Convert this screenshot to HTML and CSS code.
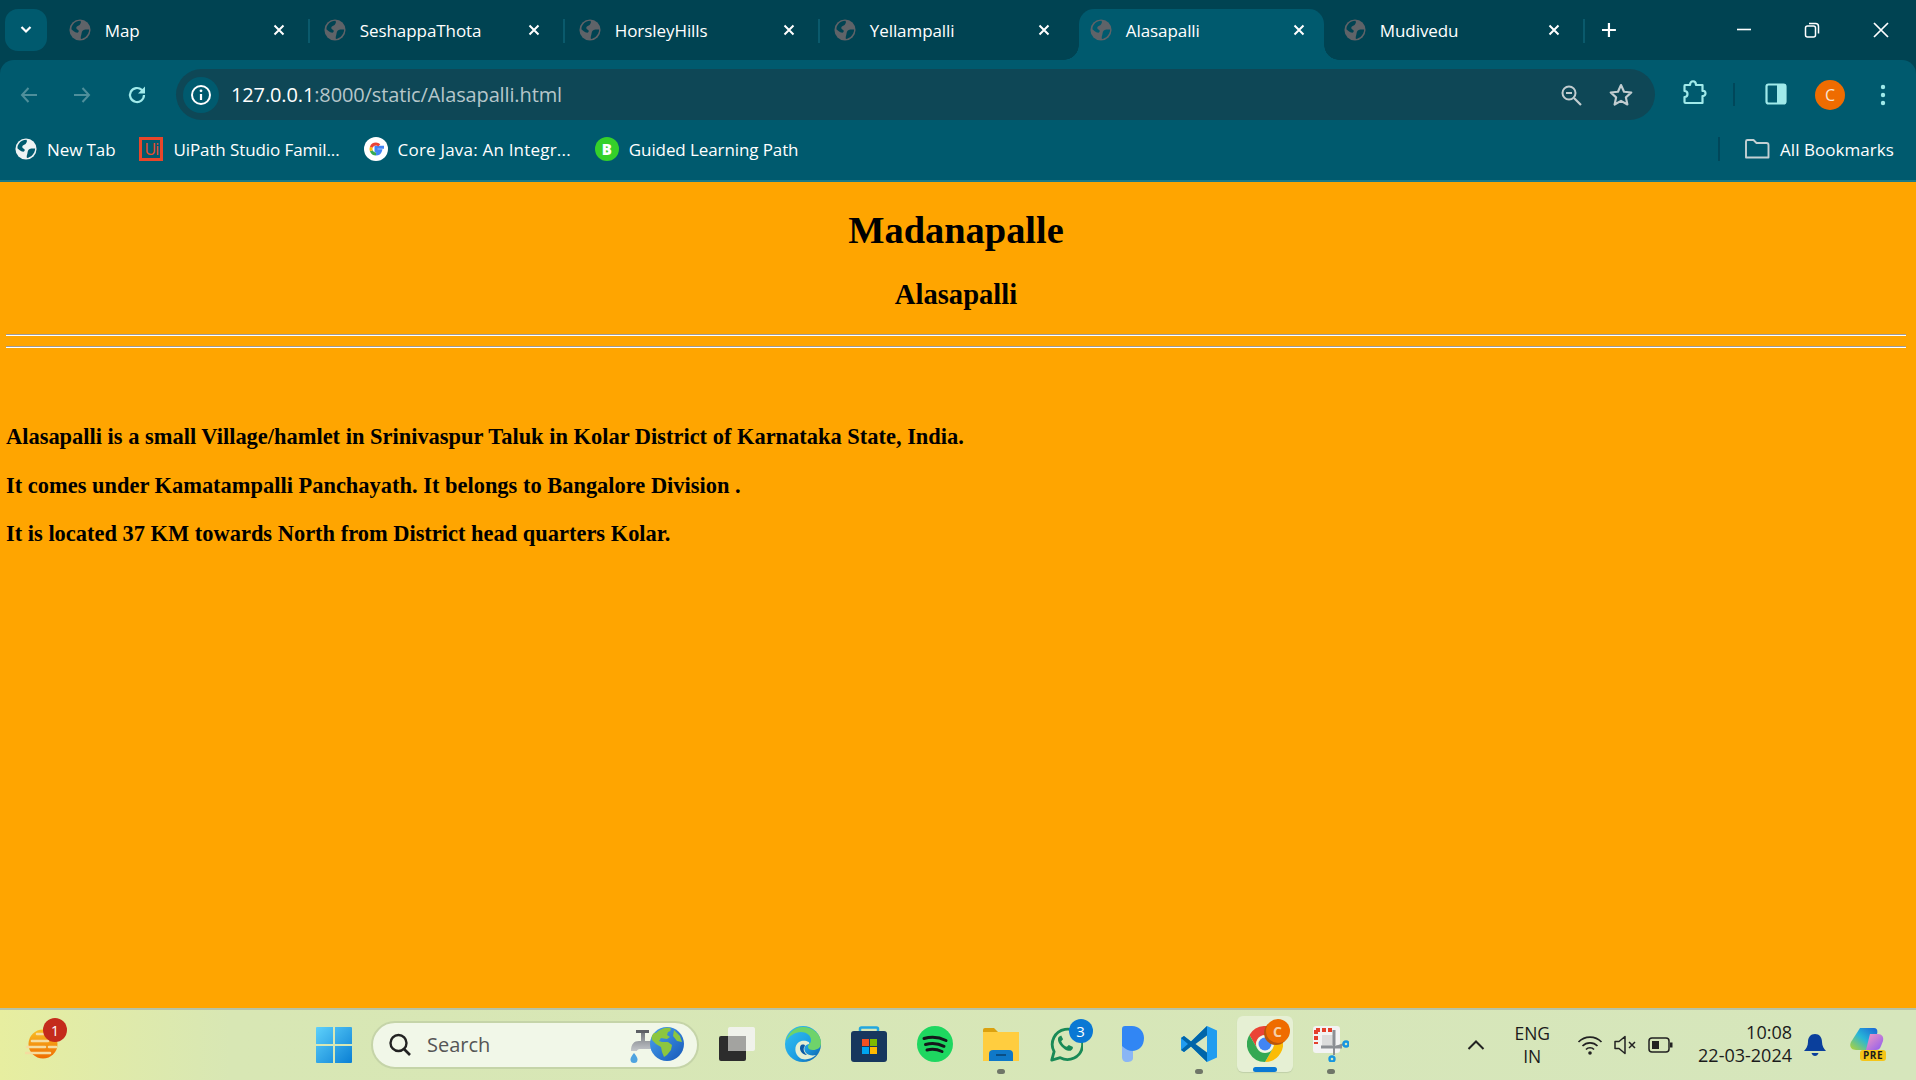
FILE: index.html
```html
<!DOCTYPE html>
<html lang="en">
<head>
<meta charset="utf-8">
<title>Alasapalli</title>
<link rel="stylesheet" href="styles.css">
</head>
<body>
<svg class="defs" width="0" height="0" aria-hidden="true">
  <symbol id="globe" viewBox="0 0 24 24">
    <circle cx="12" cy="12" r="11.5" fill="currentColor"/>
    <path d="M4 6.500C6 3.500 9 2 12.500 2c1 1.500 .5 3-1 4.500-1 1-3 1-3.500 2.500-.5 2 1.500 2.500 2.500 3.500.5 1-.5 2.500-1.500 2.500C6 15 4 12 2.800 11.500 2.500 9.500 3 8 4 6.500zM16 12c2.500-1 4.500-.5 6-.5 0 3-1.500 6-4 8-1 .5-3 2-5 2.300-.5-1.800 0-3 .5-4.800.5-2.500.5-4 2.500-5z" class="globe-land"/>
  </symbol>
  <symbol id="x" viewBox="0 0 14 14"><path d="M2.500 2.500l9 9m0-9l-9 9" fill="none" stroke="currentColor" stroke-width="2"/></symbol>
</svg>

<div class="browser">
  <div class="tabstrip">
    <button class="tab-search"><svg width="14" height="10" viewBox="0 0 14 10"><path d="M2.500 2l4.500 4.500L11.500 2" fill="none" stroke="#fff" stroke-width="2.200"/></svg></button>
    <div class="tabs">
      <div class="tab sep"><svg class="fav"><use href="#globe"/></svg><span class="tab-title">Map</span><svg class="close"><use href="#x"/></svg></div>
      <div class="tab sep"><svg class="fav"><use href="#globe"/></svg><span class="tab-title">SeshappaThota</span><svg class="close"><use href="#x"/></svg></div>
      <div class="tab sep"><svg class="fav"><use href="#globe"/></svg><span class="tab-title">HorsleyHills</span><svg class="close"><use href="#x"/></svg></div>
      <div class="tab"><svg class="fav"><use href="#globe"/></svg><span class="tab-title">Yellampalli</span><svg class="close"><use href="#x"/></svg></div>
      <div class="tab active"><svg class="fav"><use href="#globe"/></svg><span class="tab-title">Alasapalli</span><svg class="close"><use href="#x"/></svg></div>
      <div class="tab sep"><svg class="fav"><use href="#globe"/></svg><span class="tab-title">Mudivedu</span><svg class="close"><use href="#x"/></svg></div>
    </div>
    <svg class="newtab" width="18" height="18" viewBox="0 0 18 18"><path d="M9 2v14M2 9h14" stroke="#fff" stroke-width="2.200"/></svg>
    <div class="win">
      <svg width="16" height="16" viewBox="0 0 16 16"><path d="M1 7.500h14" stroke="#fff" stroke-width="1.600"/></svg>
      <svg width="16" height="18" viewBox="0 0 16 18"><rect x="1.500" y="5" width="10" height="11" rx="2" fill="none" stroke="#fff" stroke-width="1.500"/><path d="M5 2.500h6.500a3 3 0 0 1 3 3v7" fill="none" stroke="#fff" stroke-width="1.500"/></svg>
      <svg width="18" height="18" viewBox="0 0 18 18"><path d="M2 2l14 14M16 2L2 16" stroke="#fff" stroke-width="1.700"/></svg>
    </div>
  </div>

  <div class="toolbar">
    <svg class="nav back" width="22" height="22" viewBox="0 0 22 22"><path d="M19 11H4m6.500-7L4 11l6.500 7" fill="none" stroke="#4f8f9b" stroke-width="2"/></svg>
    <svg class="nav fwd" width="22" height="22" viewBox="0 0 22 22"><path d="M3 11h15m-6.500-7l6.500 7-6.500 7" fill="none" stroke="#4f8f9b" stroke-width="2"/></svg>
    <svg class="nav reload" width="22" height="22" viewBox="0 0 22 22"><path d="M18 11a7 7 0 1 1-2.200-5.100L18 8" fill="none" stroke="#a0eaea" stroke-width="2.200"/><path d="M19 2.500v7h-7z" fill="#a0eaea"/></svg>
    <div class="omnibox">
      <span class="info"><svg width="22" height="22" viewBox="0 0 22 22"><circle cx="11" cy="11" r="9" fill="none" stroke="#fff" stroke-width="2"/><path d="M11 10v6" stroke="#fff" stroke-width="2.200"/><circle cx="11" cy="6.800" r="1.400" fill="#fff"/></svg></span>
      <span class="url"><span class="url-host">127.0.0.1</span>:8000/static/Alasapalli.html</span>
      <svg class="zoom-ic" width="24" height="24" viewBox="0 0 24 24"><circle cx="10" cy="10" r="6.500" fill="none" stroke="#c2cdd0" stroke-width="2"/><path d="M7 10h6" stroke="#c2cdd0" stroke-width="2"/><path d="M15 15l7 7" stroke="#c2cdd0" stroke-width="2.200"/></svg>
      <svg class="star-ic" width="26" height="26" viewBox="0 0 24 24"><path d="M12 2.800l2.800 6.200 6.700.7-5 4.500 1.400 6.600-5.900-3.400-5.900 3.400 1.400-6.600-5-4.500 6.700-.7z" fill="none" stroke="#c2cdd0" stroke-width="2" stroke-linejoin="round"/></svg>
    </div>
    <svg class="ext" width="26" height="28" viewBox="0 0 26 28"><path d="M3 6h5c0-5 6-5 6 0h6.500v6c4-1 4 5.500 0 5v7H3.500c-1 0-1-1-1-1v-5c4 0 4-6 0-6V7c0-1 .5-1 .5-1z" fill="none" stroke="#a0eaea" stroke-width="2.200" stroke-linejoin="round"/></svg>
    <span class="tool-sep"></span>
    <svg class="panel" width="22" height="22" viewBox="0 0 22 22"><rect x="1.500" y="1.500" width="19" height="19" rx="2" fill="none" stroke="#a0eaea" stroke-width="2.200"/><rect x="12" y="1.500" width="8.500" height="19" fill="#a0eaea"/></svg>
    <span class="avatar">C</span>
    <svg class="dots" width="6" height="24" viewBox="0 0 6 24"><circle cx="3" cy="4" r="2.200" fill="#a0eaea"/><circle cx="3" cy="12" r="2.200" fill="#a0eaea"/><circle cx="3" cy="20" r="2.200" fill="#a0eaea"/></svg>
  </div>

  <div class="bookmarks">
    <span class="bm"><svg class="bm-globe"><use href="#globe"/></svg>New Tab</span>
    <span class="bm"><span class="ui-logo">Ui</span>UiPath Studio Famil...</span>
    <span class="bm bm-wide"><span class="g-logo"><svg width="20" height="20" viewBox="0 0 20 20"><path d="M18 8.200h-8v3.500h4.500c-.6 2-2.300 3.200-4.500 3.200" fill="none" stroke="#4285f4" stroke-width="3"/><path d="M10 14.900c-2.200 0-4-1.300-4.700-3.200" fill="none" stroke="#34a853" stroke-width="3"/><path d="M5.300 11.700a5 5 0 0 1 0-3.500" fill="none" stroke="#fbbc05" stroke-width="3"/><path d="M5.300 8.200C6 6.300 7.800 5 10 5c1.300 0 2.400.5 3.300 1.300" fill="none" stroke="#ea4335" stroke-width="3"/></svg></span>Core Java: An Integr...</span>
    <span class="bm"><span class="b-logo">B</span>Guided Learning Path</span>
    <span class="bm-sep"></span>
    <span class="bm all"><svg width="26" height="22" viewBox="0 0 26 22"><path d="M2 19.500V3.500c0-1 .5-1.500 1.500-1.500h6l3 3h10c1 0 2 .5 2 2v12.500z" fill="none" stroke="#c4d0d3" stroke-width="1.900" stroke-linejoin="round"/></svg>All Bookmarks</span>
  </div>
</div>

<main class="page">
  <h1>Madanapalle</h1>
  <h2>Alasapalli</h2>
  <hr>
  <hr>
  <p class="first">Alasapalli is a small Village/hamlet in Srinivaspur Taluk in Kolar District of Karnataka State, India.</p>
  <p>It comes under Kamatampalli Panchayath. It belongs to Bangalore Division .</p>
  <p>It is located 37 KM towards North from District head quarters Kolar.</p>
</main>

<footer class="taskbar">
  <div class="weather">
    <svg width="36" height="32" viewBox="0 0 36 32"><defs><linearGradient id="sun" x1="0" y1="0" x2="0" y2="1"><stop offset="0" stop-color="#f9c025"/><stop offset="1" stop-color="#ef6c00"/></linearGradient></defs><circle cx="18" cy="15" r="14.500" fill="url(#sun)"/><path d="M12 5h13M7 12h16M2 18h18M24 18h7M1 24h24" stroke="#f5dca0" stroke-width="2.600" stroke-linecap="round"/></svg>
    <span class="weather-badge">1</span>
  </div>
  <div class="center">
    <svg class="start" width="36" height="36" viewBox="0 0 36 36"><defs><linearGradient id="w1" x1="0" y1="0" x2="1" y2="1"><stop offset="0" stop-color="#5ed1fb"/><stop offset="1" stop-color="#0a7fd4"/></linearGradient></defs><path d="M1 0h16v17H0V1a1 1 0 0 1 1-1zM19 0h16a1 1 0 0 1 1 1v16H19zM0 19h17v17H1a1 1 0 0 1-1-1zM19 19h17v16a1 1 0 0 1-1 1H19z" fill="url(#w1)"/></svg>
    <div class="search">
      <svg width="26" height="26" viewBox="0 0 26 26"><circle cx="11.500" cy="11" r="8" fill="none" stroke="#222" stroke-width="2.400"/><path d="M17 17l6 6" stroke="#222" stroke-width="2.600"/></svg>
      <span class="search-text">Search</span>
      <svg class="search-art" width="56" height="42" viewBox="0 0 56 42"><defs><linearGradient id="tap" x1="0" y1="0" x2="0" y2="1"><stop offset="0" stop-color="#777b80"/><stop offset="1" stop-color="#c3c6ca"/></linearGradient><linearGradient id="sea" x1="0" y1="0" x2="1" y2="1"><stop offset="0" stop-color="#4aa3f0"/><stop offset="1" stop-color="#1557b8"/></linearGradient></defs><path d="M3 28c0-7 3-10 8-10h2v-8h4v8h6v8H12c-2 0-3 1-3 2z" fill="url(#tap)"/><path d="M8 7h13v3H8z" fill="#5d6065"/><path d="M6 30c2 2.500 3.500 4.500 3.500 6.500a3.500 3.500 0 0 1-7 0c0-2 1.500-4 3.500-6.500z" fill="#4ea3e0"/><circle cx="39" cy="21" r="17" fill="url(#sea)"/><path d="M28 10c4-4 10-6 14-5 2 1 0 4-2 4l-1 3 3 2-3 2-6-1-2 3 3 1 6 0 4 3-1 5-4 5-3 2-2-5-1-5-5-3-4-4c-1-3 0-5 2-7z" fill="#8cc63f"/><path d="M46 7l6 6 2 6-5-1-4-5z" fill="#8cc63f"/></svg>
    </div>
    <span class="tb"><svg width="36" height="34" viewBox="0 0 36 34"><rect y="9" width="27" height="25" rx="2" fill="#2c2c2c"/><rect x="9" width="27" height="24" rx="2" fill="#f4f4f2" fill-opacity=".88"/><rect x="9" y="9" width="18" height="15" fill="#a3a3a0"/></svg></span>
    <span class="tb"><svg width="36" height="36" viewBox="0 0 36 36"><defs><linearGradient id="e1" x1="0" y1="0" x2="1" y2="1"><stop offset="0" stop-color="#35c1f1"/><stop offset=".6" stop-color="#1b9de2"/><stop offset="1" stop-color="#0c59a4"/></linearGradient></defs><circle cx="18" cy="18" r="18" fill="url(#e1)"/><path d="M18 1c10 0 18 7 18 16 0 5-4 7-8 7-3 0-5-1-5-3 0-3 3-3 3-7 0-5-5-8-10-8-6 0-12 4-15 9C3 7 10 1 18 1z" fill="#6fd36a"/><path d="M14 16c5-3 12 0 10 2-5 1-6 5-3 9 2 2 6 3 10 2-4 4-12 6-16 3-6-4-6-13-1-16z" fill="#e4efd3"/><path d="M16 19c3-1 4 0 4 1-2 2-2 6 2 9-5 0-9-6-6-10z" fill="#0c59a4"/></svg></span>
    <span class="tb"><svg width="36" height="36" viewBox="0 0 36 36"><path d="M9 7V3c0-1 .5-1.500 1.500-1.500h15c1 0 1.500 .5 1.500 1.500v4" fill="none" stroke="#22a7e0" stroke-width="2.500"/><rect y="5" width="36" height="31" rx="3" fill="#17375e"/><rect x="11" y="13" width="7" height="7" fill="#f25022"/><rect x="19" y="13" width="7" height="7" fill="#7fba00"/><rect x="11" y="21" width="7" height="7" fill="#00a4ef"/><rect x="19" y="21" width="7" height="7" fill="#ffb900"/></svg></span>
    <span class="tb"><svg width="36" height="36" viewBox="0 0 36 36"><circle cx="18" cy="18" r="18" fill="#1ed760"/><path d="M7 12.500c7-2 15-1.500 22 2M8.500 18.500c6-1.600 13-1 18.500 1.800M10 24c5-1.300 10-.8 15 1.500" fill="none" stroke="#14171a" stroke-width="3" stroke-linecap="round"/></svg></span>
    <span class="tb running"><svg width="36" height="33" viewBox="0 0 36 33"><path d="M0 2a2 2 0 0 1 2-2h9l4 4H0z" fill="#dba10f"/><path d="M0 4h36v29H0z" fill="#ffcd3f"/><path d="M6 33v-7a4 4 0 0 1 4-4h16a4 4 0 0 1 4 4v7z" fill="#0f78c8"/><path d="M13 27h10" stroke="#0a4e85" stroke-width="2"/></svg></span>
    <span class="tb wa"><svg class="wa-icon" width="36" height="36" viewBox="0 0 38 38"><path d="M5 36l2.500-9A16 16 0 1 1 14 33.500z" fill="none" stroke="#198a57" stroke-width="3" stroke-linejoin="round"/><path d="M13 11c-2 1-2 5 1 9s8 7 11 6c2-1 3-3 2-4l-4-2-2 2c-2-.5-5-3-6-6l2-2-2-4z" fill="#198a57"/></svg><span class="wa-badge">3</span></span>
    <span class="tb"><svg width="22" height="36" viewBox="0 0 22 36"><path d="M0 3a3 3 0 0 1 3-3h7c7 0 12 5 12 12 0 8-5 13-12 13v1H0z" fill="#3186f4"/><path d="M0 20c3 3 7 5 11 5v7c0 3-3 4-6 4-3 0-5-2-5-5z" fill="#8ab6f4"/></svg></span>
    <span class="tb running"><svg width="36" height="36" viewBox="0 0 36 36"><path d="M26 0l10 4.500v27L26 36 10 20.500 3 26 0 24V12l3-2 7 5.500z" fill="#1f9cf0"/><path d="M26 0v36l-16-15.500L3 26 0 24l7-6-7-6 3-2 7 5.500z" fill="#0065a9"/><path d="M26 9.500L14.500 18 26 26.500z" fill="#d8e7c0"/></svg></span>
    <span class="tb chrome">
      <svg width="36" height="36" viewBox="0 0 36 36"><path d="M2.400 9A18 18 0 0 1 33.600 9H18a9 9 0 0 0-7.800 13.500z" fill="#ea4335"/><path d="M33.600 9A18 18 0 0 1 18 36l7.800-13.500A9 9 0 0 0 18 9z" fill="#fbbc05"/><path d="M18 36A18 18 0 0 1 2.400 9l7.800 13.500a9 9 0 0 0 15.600 0z" fill="#34a853"/><circle cx="18" cy="18" r="8.500" fill="#f2f6ea"/><circle cx="18" cy="18" r="6.500" fill="#4285f4"/></svg>
      <span class="chrome-badge">C</span>
    </span>
    <span class="tb running"><svg width="36" height="36" viewBox="0 0 36 36"><rect width="27" height="27" rx="3" fill="#f3f3f3"/><rect x="9" y="9" width="13" height="13" fill="#dcdcdc"/><path d="M3 4h16M3 4v14" stroke="#e53f2b" stroke-width="4" stroke-dasharray="4 2"/><path d="M21 4v15" stroke="#8c8f94" stroke-width="3"/><path d="M8 21h21" stroke="#8c8f94" stroke-width="3"/><path d="M21 19v10M23 21l8-3" stroke="#8c8f94" stroke-width="2"/><circle cx="33" cy="18" r="2.500" fill="none" stroke="#1696e0" stroke-width="2.400"/><circle cx="19" cy="33" r="2.500" fill="none" stroke="#1696e0" stroke-width="2.400"/></svg></span>
  </div>
  <div class="tray">
    <svg class="chev" width="20" height="12" viewBox="0 0 20 12"><path d="M2.500 10L10 2.500 17.500 10" fill="none" stroke="#222" stroke-width="2"/></svg>
    <div class="lang"><span>ENG</span><span>IN</span></div>
    <svg class="wifi" width="26" height="20" viewBox="0 0 26 20"><path d="M1.500 7a16 16 0 0 1 23 0M5.500 11a10.500 10.500 0 0 1 15 0M9 14.500a5.500 5.500 0 0 1 8 0" fill="none" stroke="#222" stroke-width="1.700"/><circle cx="13" cy="18" r="1.800" fill="#222"/></svg>
    <svg class="vol" width="24" height="20" viewBox="0 0 24 20"><path d="M1 6.500h4L11 1.500v17L5 13.500H1z" fill="none" stroke="#222" stroke-width="1.500" stroke-linejoin="round"/><path d="M15 7l6 6m0-6l-6 6" stroke="#222" stroke-width="1.500"/></svg>
    <svg class="batt" width="25" height="16" viewBox="0 0 25 16"><rect x="1" y="1" width="20" height="14" rx="3" fill="none" stroke="#222" stroke-width="1.500"/><rect x="4" y="4" width="7" height="8" fill="#222"/><rect x="22" y="5.500" width="2.500" height="5" fill="#222"/></svg>
    <div class="clock"><span>10:08</span><span>22-03-2024</span></div>
    <svg class="bell" width="22" height="24" viewBox="0 0 22 24"><path d="M11 1c4.500 0 7 3.500 7 8 0 4 2 7 4 9H0c2-2 4-5 4-9 0-4.500 2.500-8 7-8z" fill="#0a3f9c"/><path d="M7.500 20h7c-.5 2-2 3-3.500 3s-3-1-3.500-3z" fill="#0a3f9c"/></svg>
    <span class="copilot">
      <svg width="34" height="26" viewBox="0 0 34 26"><defs><linearGradient id="c1" x1="0" y1="1" x2="1" y2="0"><stop offset="0" stop-color="#b8d430"/><stop offset=".5" stop-color="#27b6d8"/><stop offset="1" stop-color="#1a62d6"/></linearGradient><linearGradient id="c2" x1="0" y1="0" x2="1" y2="1"><stop offset="0" stop-color="#f59ac0"/><stop offset="1" stop-color="#8b5cf0"/></linearGradient></defs><path d="M10 2h14c3 0 4 3 3 6l-7 16H6C1 24-1 20 1 16z" fill="url(#c1)"/><path d="M20 8h8c4 0 6 3 5 7l-2 5c-1 3-3 4-5 4h-10z" fill="url(#c2)"/></svg>
      <span class="pre">PRE</span>
    </span>
  </div>
</footer>
</body>
</html>
```
FILE: styles.css
```css
* { box-sizing: border-box; }
html, body { margin: 0; height: 100%; }
body {
  display: flex;
  flex-direction: column;
  height: 1080px;
  overflow: hidden;
  background: #ffa500;
  font-family: "Open Sans", "Noto Sans", sans-serif;
}
.defs { position: absolute; }

/* browser chrome */
.browser { flex: none; color: #fff; background: #004352; }
.tabstrip {
  height: 60px;
  background: #004352;
  display: flex;
  align-items: flex-start;
  padding: 9px 0 0 5px;
}
.tab-search {
  width: 42px;
  height: 42px;
  margin-right: 8px;
  border: 0;
  padding: 0;
  border-radius: 13px;
  background: #005a6e;
  display: flex;
  align-items: center;
  justify-content: center;
}
.tabs { display: flex; }
.tab {
  width: 255px;
  height: 51px;
  display: flex;
  align-items: center;
  padding: 0 24px 9px 14px;
  position: relative;
  font-size: 17px;
}
.tab.sep::after {
  content: "";
  position: absolute;
  right: 0;
  top: 10px;
  width: 2px;
  height: 24px;
  background: #0a5a6c;
}
.tab.active {
  width: 245px;
  margin: 0 6px 0 4px;
  padding: 0 18px 9px 11px;
  background: #005a6e;
  border-radius: 15px 15px 0 0;
}
.tab.active::before,
.tab.active::after {
  content: "";
  position: absolute;
  bottom: 0;
  width: 15px;
  height: 15px;
}
.tab.active::before {
  left: -15px;
  background: radial-gradient(circle at 0 0, transparent 14.5px, #005a6e 15px);
}
.tab.active::after {
  right: -15px;
  background: radial-gradient(circle at 100% 0, transparent 14.5px, #005a6e 15px);
}
.fav { width: 22px; height: 22px; color: #5f6368; flex: none; --land: #004352; }
.tab.active .fav { --land: #005a6e; }
.globe-land { fill: var(--land, #004352); }
.tab-title { flex: 1; margin-left: 14px; letter-spacing: -.07px; margin-top: 1px; }
.close { width: 14px; height: 14px; color: #fff; flex: none; }
.newtab { margin: 12px 0 0 15px; }
.win {
  margin-left: auto;
  padding: 12px 26px 0 0;
  width: 300px;
  display: flex;
  justify-content: flex-end;
  gap: 52px;
  align-items: center;
}

.toolbar {
  height: 60px;
  background: #005a6e;
  border-radius: 14px 14px 0 0;
  display: flex;
  align-items: flex-start;
  padding: 9px 0 0 18px;
}
.nav { margin: 15px 31px 0 0; }
.fwd { margin-right: 33px; }
.reload { margin-right: 28px; }
.omnibox {
  width: 1479px;
  height: 51px;
  background: #0e4756;
  border-radius: 26px;
  display: flex;
  align-items: center;
  padding: 0 21px 0 7px;
}
.info {
  width: 36px;
  height: 36px;
  border-radius: 50%;
  background: #005a6e;
  display: flex;
  align-items: center;
  justify-content: center;
}
.url { flex: 1; margin-left: 12px; font-size: 20px; color: #b6c6ca; letter-spacing: -.13px; }
.url-host { color: #fff; }
.zoom-ic { margin-right: 25px; }
.ext { margin: 10px 0 0 27px; }
.tool-sep { width: 2px; height: 23px; background: #00475a; margin: 14px 0 0 25px; }
.panel { margin: 14px 0 0 30px; }
.avatar {
  width: 30px;
  height: 30px;
  margin: 11px 0 0 28px;
  border-radius: 50%;
  background: #ef6c00;
  color: #f7e3d2;
  font-size: 16px;
  display: flex;
  align-items: center;
  justify-content: center;
}
.dots { margin: 14px 0 0 35px; }

.bookmarks {
  height: 62px;
  background: #005a6e;
  border-bottom: 2px solid #1a7a88;
  display: flex;
  align-items: center;
  padding: 0 22px 2px 15px;
  font-size: 17px;
  letter-spacing: -.1px;
}
.bm { display: flex; align-items: center; margin-right: 24px; gap: 10px; white-space: nowrap; color: #fff; }
.bm-wide { letter-spacing: .2px; }
.bm-globe { width: 22px; height: 22px; color: #eef3f4; --land: #005a6e; }
.ui-logo {
  width: 24px;
  height: 24px;
  border: 3px solid #e8462a;
  color: #ee4a2a;
  font-size: 16px;
  letter-spacing: -1px;
  display: flex;
  align-items: center;
  justify-content: center;
}
.g-logo, .b-logo {
  width: 24px;
  height: 24px;
  border-radius: 50%;
  display: flex;
  align-items: center;
  justify-content: center;
}
.g-logo { background: #fff; }
.b-logo { background: #35d02a; color: #fff; font-weight: 800; font-size: 15px; }
.bm-sep { margin-left: auto; width: 2px; height: 24px; background: #00475a; margin-right: 24px; }
.all { margin-right: 0; letter-spacing: .05px; }

/* page */
.page { flex: 1; padding: 0 10px 0 6px; color: #000; font-family: "Liberation Serif", serif; }
h1 { margin: 0; padding-top: 26px; height: 91px; text-align: center; font-size: 38.4px; line-height: 44px; }
h2 { margin: 0; height: 61px; padding-top: 6px; text-align: center; font-size: 28.600px; line-height: 32px; }
hr { margin: 0 0 10px; height: 2px; border: 0; background: #fff; border-top: 1px solid #9c9c9c; }
.page p { margin: 0 0 24.500px; font-size: 22.450px; line-height: 24px; font-weight: 700; }
.page p.first { margin-top: 77px; }

/* taskbar */
.taskbar {
  flex: none;
  height: 72px;
  border-top: 2px solid #b6c2a6;
  background: linear-gradient(90deg, #e7eea0 0, #d8e7b4 12%, #d6e6bc 100%);
  display: flex;
  align-items: center;
  position: relative;
  color: #1b1b1b;
}
.weather { position: relative; margin-left: 25px; width: 61px; height: 52px; padding-top: 10px; }
.weather svg { display: block; }
.weather-badge {
  position: absolute;
  left: 18px;
  top: -1px;
  width: 24px;
  height: 24px;
  border-radius: 50%;
  background: #c42b1c;
  color: #fff;
  font: 14px "Open Sans", sans-serif;
  display: flex;
  align-items: center;
  justify-content: center;
}
.center { margin-left: 230px; display: flex; align-items: center; }
.start { margin-right: 19px; margin-bottom: 1px; }
.search {
  width: 328px;
  height: 48px;
  background: #f1f7e8;
  border: 2px solid #c5d4a8;
  border-radius: 24px;
  display: flex;
  align-items: center;
  padding-left: 14px;
  position: relative;
  margin-right: 4.500px;
}
.search-text { margin: -2px 0 0 14px; font-size: 20px; color: #555; }
.search-art { position: absolute; right: 13px; top: 0; }
.tb {
  width: 66px;
  height: 66px;
  margin-bottom: 2px;
  display: flex;
  align-items: center;
  justify-content: center;
  position: relative;
}
.tb.running::after {
  content: "";
  position: absolute;
  bottom: 3px;
  left: 29px;
  width: 8px;
  height: 5px;
  border-radius: 3px;
  background: #6f7668;
}
.wa-icon { margin-right: 3px; }
.wa-badge {
  position: absolute;
  right: 7px;
  top: 8px;
  width: 24px;
  height: 24px;
  border-radius: 50%;
  background: #0a78d4;
  color: #fff;
  font-size: 15px;
  display: flex;
  align-items: center;
  justify-content: center;
}
.chrome {
  width: 56px;
  height: 56px;
  margin: 0 5px 2px;
  background: #e6f0d4;
  border-radius: 6px;
  box-shadow: 0 1px 1px #bfcfa8;
}
.chrome::after {
  content: "";
  position: absolute;
  bottom: 0;
  left: 16px;
  width: 24px;
  height: 5px;
  border-radius: 3px;
  background: #0a78d4;
}
.chrome-badge {
  position: absolute;
  right: 3px;
  top: 3px;
  width: 24px;
  height: 24px;
  border-radius: 50%;
  background: #ef6c00;
  box-shadow: -2px 2px 0 #b9560a;
  color: #f5d0a8;
  font-size: 14px;
  font-weight: 700;
  display: flex;
  align-items: center;
  justify-content: center;
}
.tray { position: absolute; left: 0; right: 0; top: 0; bottom: 0; pointer-events: none; display: flex; align-items: center; justify-content: flex-end; padding-right: 30px; }
.chev { margin-right: 28px; }
.lang { display: flex; flex-direction: column; align-items: center; font-size: 17.500px; line-height: 23px; margin-right: 27px; }
.wifi { margin-right: 11px; }
.vol { margin-right: 10px; }
.batt { margin-right: 25px; }
.clock { display: flex; flex-direction: column; align-items: flex-end; font-size: 18px; line-height: 23px; margin: -2px 12px 0 0; }
.bell { margin-right: 24px; }
.copilot { position: relative; width: 36px; height: 36px; margin-top: -2px; }
.pre {
  position: absolute;
  right: 0;
  bottom: 1px;
  background: #f5c518;
  border-radius: 3px;
  padding: 0 3px;
  font-size: 10px;
  line-height: 11px;
  font-weight: 700;
  letter-spacing: .5px;
}
```
